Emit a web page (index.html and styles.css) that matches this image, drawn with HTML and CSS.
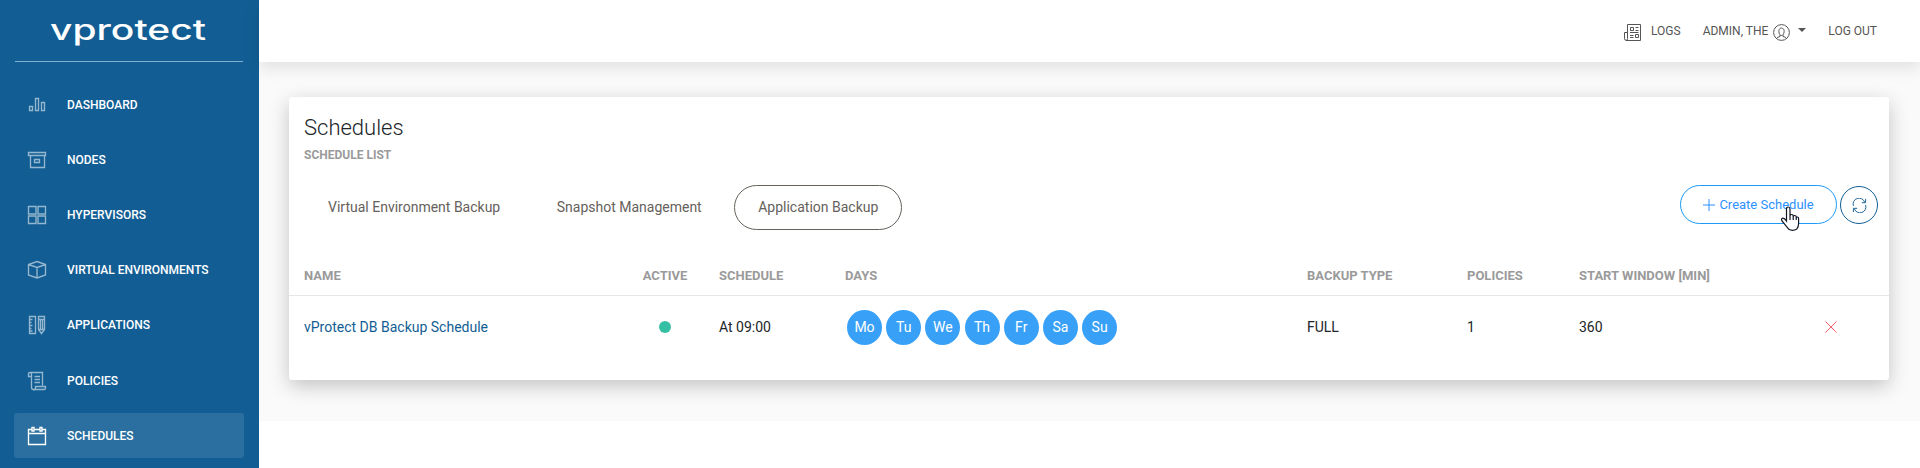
FILE: index.html
```html
<!DOCTYPE html>
<html lang="en">
<head>
<meta charset="utf-8">
<title>vProtect - Schedules</title>
<link rel="stylesheet" href="styles.css">
</head>
<body>
<div class="app">
  <aside class="sidebar">
    <div class="brand">
      <svg class="logo" width="172" height="40" viewBox="0 0 172 40"><text class="logo-text" x="7" y="29" textLength="156" lengthAdjust="spacingAndGlyphs">vprotect</text></svg>
    </div>
    <nav class="menu">
      <a class="menu-item"><svg class="icon" viewBox="0 0 20 20"><path d="M2.500 11.500h3v4h-3zM8.500 3.500h3v12h-3zM14.500 7.500h3v8h-3z"/></svg>DASHBOARD</a>
      <a class="menu-item"><svg class="icon" viewBox="0 0 20 20"><path d="M1.500 2.500h17v3h-17zM3.500 5.500v12h14v-12M7.500 9.500h5v3h-5z"/></svg>NODES</a>
      <a class="menu-item"><svg class="icon" viewBox="0 0 20 20"><path d="M1.500 1.500h7.500v7.500h-7.500zM11 1.500h7.500v7.500h-7.500zM1.500 11h7.500v7.500h-7.500zM11 11h7.500v7.500h-7.500z"/></svg>HYPERVISORS</a>
      <a class="menu-item"><svg class="icon" viewBox="0 0 20 20"><path d="M10 1.500l8.500 3v10.500l-8.500 3-8.500-3v-10.500zM1.500 4.500l8.500 3 8.500-3M10 7.500v10.500"/></svg>VIRTUAL ENVIRONMENTS</a>
      <a class="menu-item"><svg class="icon" viewBox="0 0 20 20"><path d="M2.500 1.500h6v17h-6zM2.500 4.500h3M2.500 7.500h2M2.500 10.500h3M2.500 13.500h2M2.500 16h3M11.500 1.500h6v13l-3 4-3-4zM11.500 4.500h6M11.500 14.500h6M13.500 4.500v10M15.500 4.500v10"/></svg>APPLICATIONS</a>
      <a class="menu-item"><svg class="icon" viewBox="0 0 20 20"><path d="M4.500 5.500h-3v-2.500q0-1.500 1.500-1.500h12.500v13M3 1.500q1.500 0 1.500 1.500v13.500q0 2 2 2h10.500q1.500 0 1.500-1.500v-1.500h-10v1.500q0 2-2 2M7.500 5.500h5.500M7.500 8.500h5.500M7.500 11.500h5.500"/></svg>POLICIES</a>
      <a class="menu-item active"><svg class="icon" viewBox="0 0 20 20"><path d="M4.500 3.500h-3v15h17v-15h-3M7.500 3.500h5M1.500 7.500h17M5 1.500h2v3.500h-2zM13 1.500h2v3.500h-2z"/></svg>SCHEDULES</a>
    </nav>
  </aside>
  <div class="main">
    <header class="topbar">
      <a class="top-link logs"><svg class="top-icon" viewBox="0 0 17 17"><path d="M3.500 .5h13v16h-14q-2 0-2-2v-6h3M3.500 .5v14q0 2-1.500 2M6.500 3.500h3v3h-3zM11.500 3.500h3M11.500 6.500h3M6 8.500h8.500M6 11.500h3.500M6 13.500h3.500M11.500 10.500h3v3h-3z"/></svg>LOGS</a>
      <a class="top-link user">ADMIN, THE<svg class="top-icon" viewBox="0 0 17 17"><circle cx="8.500" cy="8.500" r="7.900"/><path d="M8.500 4c4 0 3 7.500 0 7.500s-4-7.500 0-7.500M3.500 14.500q1-1.700 3.500-2v-1.500M13.500 14.500q-1-1.700-3.500-2v-1.500"/></svg><span class="caret"></span></a>
      <a class="top-link">LOG OUT</a>
    </header>
    <main class="content">
      <section class="card">
        <h1 class="title">Schedules</h1>
        <p class="subtitle">SCHEDULE LIST</p>
        <div class="toolbar">
          <div class="tabs">
            <a class="tab">Virtual Environment Backup</a>
            <a class="tab">Snapshot Management</a>
            <a class="tab selected">Application Backup</a>
          </div>
          <div class="actions">
            <button class="create"><svg class="plus" viewBox="0 0 12 12"><path d="M6 0v12M0 6h12"/></svg>Create Schedule
              <svg class="pointer" width="20" height="26" viewBox="0 0 20 26"><path d="M6.500 14.500V3q0-2 1.700-2T10 3v7q0-1.500 1.600-1.500t1.600 1.500v1q0-1.500 1.500-1.500t1.500 1.500v1q0-1 1.200-1t1.200 1.500v5q0 3-1.800 5.500-4 2.500-8 .3L2 15q-1-2.300.5-2.800 2-.3 4 2.800zM10 10v4M13.200 11v3M16.200 12v2"/></svg>
            </button>
            <button class="refresh"><svg class="refresh-icon" viewBox="0 0 16 16"><path d="M1.500 8.500A6.300 6.300 0 0 1 13.500 4.500M14.500 1v4h-4M14.500 7.500A6.300 6.300 0 0 1 2.500 11.500M1.500 15v-4h4"/></svg></button>
          </div>
        </div>
        <div class="table">
          <div class="row head">
            <span>NAME</span><span class="center">ACTIVE</span><span>SCHEDULE</span><span>DAYS</span><span>BACKUP TYPE</span><span>POLICIES</span><span>START WINDOW [MIN]</span><span></span>
          </div>
          <div class="row body">
            <a class="name">vProtect DB Backup Schedule</a>
            <span class="center"><i class="dot"></i></span>
            <span>At 09:00</span>
            <span class="days"><b class="day">Mo</b><b class="day">Tu</b><b class="day">We</b><b class="day">Th</b><b class="day">Fr</b><b class="day">Sa</b><b class="day">Su</b></span>
            <span>FULL</span><span>1</span><span>360</span>
            <span><svg class="remove" viewBox="0 0 12 12"><path d="M.5 .5l11 11M11.500 .5l-11 11"/></svg></span>
          </div>
        </div>
      </section>
    </main>
  </div>
</div>
</body>
</html>
```
FILE: styles.css
```css
* { box-sizing: border-box; }
body { margin: 0; background: #fff; font-family: Roboto, "Liberation Sans", sans-serif; font-size: 14px; color: #212529; }
svg { fill: none; stroke: currentColor; stroke-width: 1; flex: none; }
.app { display: flex; height: 468px; overflow: hidden; }
.sidebar { width: 259px; flex: none; background: #125e94; padding: 0 16px 0 15px; }
.brand { height: 62px; margin-bottom: 20px; border-bottom: 1px solid #7eb0d0; display: flex; justify-content: center; padding: 11px 0 0; }
.logo { overflow: visible; }
.logo-text { font-family: Inter, sans-serif; font-size: 28px; line-height: 34px; font-weight: 500; fill: #fff; stroke: none; }
.menu { display: flex; flex-direction: column; gap: 10px; margin: 0 -1px; }
.menu-item { height: 45.200px; display: flex; align-items: center; padding-left: 13px; border-radius: 3px; color: #fff; font-size: 12px; font-weight: 500; }
.icon { width: 20px; height: 20px; margin-right: 20px; opacity: .55; stroke-width: 1.350; }
.active { background: #2a6f9f; }
.active .icon { opacity: 1; }
.main { flex: 1; min-width: 0; }
.topbar { height: 62px; background: #fff; display: flex; justify-content: flex-end; align-items: center; gap: 22px; padding-right: 43px; box-shadow: 0 6px 15px rgba(0,0,0,.1); position: relative; }
.top-link { display: flex; align-items: center; font-size: 12px; color: #555; }
.top-icon { width: 17px; height: 17px; margin-top: 2px; }
.logs .top-icon { margin-right: 10px; }
.user .top-icon { margin-left: 5px; }
.caret { border: 4px solid transparent; border-top-color: #555; border-bottom: 0; margin: -2px 0 0 8px; }
.content { background: #fafafa; height: 359px; padding: 35px 31px 0 30px; }
.card { height: 283px; background: #fff; border-radius: 3px; box-shadow: 0 6px 20px rgba(0,0,0,.22); padding-top: 17px; }
.title { margin: 0 15px; font-size: 22px; line-height: 28px; font-weight: 300; }
.subtitle { margin: 5px 15px 0; font-size: 12px; line-height: 16px; font-weight: 700; color: #9a9a9a; }
.toolbar { display: flex; justify-content: space-between; margin: 22px 11px 0 15px; height: 45px; }
.tabs { display: flex; gap: 8.500px; }
.tab { height: 45px; padding: 0 23px; border: 1px solid transparent; border-radius: 23px; line-height: 43px; color: #66615b; }
.selected { border-color: #66615b; }
.actions { display: flex; gap: 3px; }
.create { width: 157px; height: 39px; border: 1px solid #1b9af7; border-radius: 20px; background: none; color: #2b91ff; font: 13px Roboto, sans-serif; display: flex; align-items: center; justify-content: center; position: relative; padding: 0; }
.plus { width: 12px; height: 12px; margin-right: 4px; }
.pointer { position: absolute; left: 99px; top: 20px; fill: #fff; stroke: #101522; stroke-width: 1.200; }
.refresh { width: 38px; height: 38px; margin-top: 1px; border: 1px solid #125e94; border-radius: 50%; background: none; color: #125e94; display: grid; place-items: center; padding: 0; }
.refresh-icon { width: 15px; height: 15px; }
.row { display: grid; grid-template-columns: 323px 92px 126px 462px 160px 112px 246px 1fr; padding-left: 15px; align-items: center; }
.head { height: 66px; padding-top: 26px; border-bottom: 1px solid #e6e6e6; font-size: 13px; font-weight: 700; color: #9a9a9a; }
.body { height: 62px; }
.center { display: flex; justify-content: center; width: 76px; }
.name { color: #125e94; }
.dot { width: 12px; height: 12px; border-radius: 50%; background: #35bfa3; }
.days { display: flex; gap: 4.200px; padding-left: 2px; }
.day { width: 35px; height: 35px; border-radius: 50%; background: #38a1f7; color: #fff; font-weight: 400; text-align: center; line-height: 35px; }
.remove { width: 12px; height: 12px; color: #f4606c; display: block; }
```
